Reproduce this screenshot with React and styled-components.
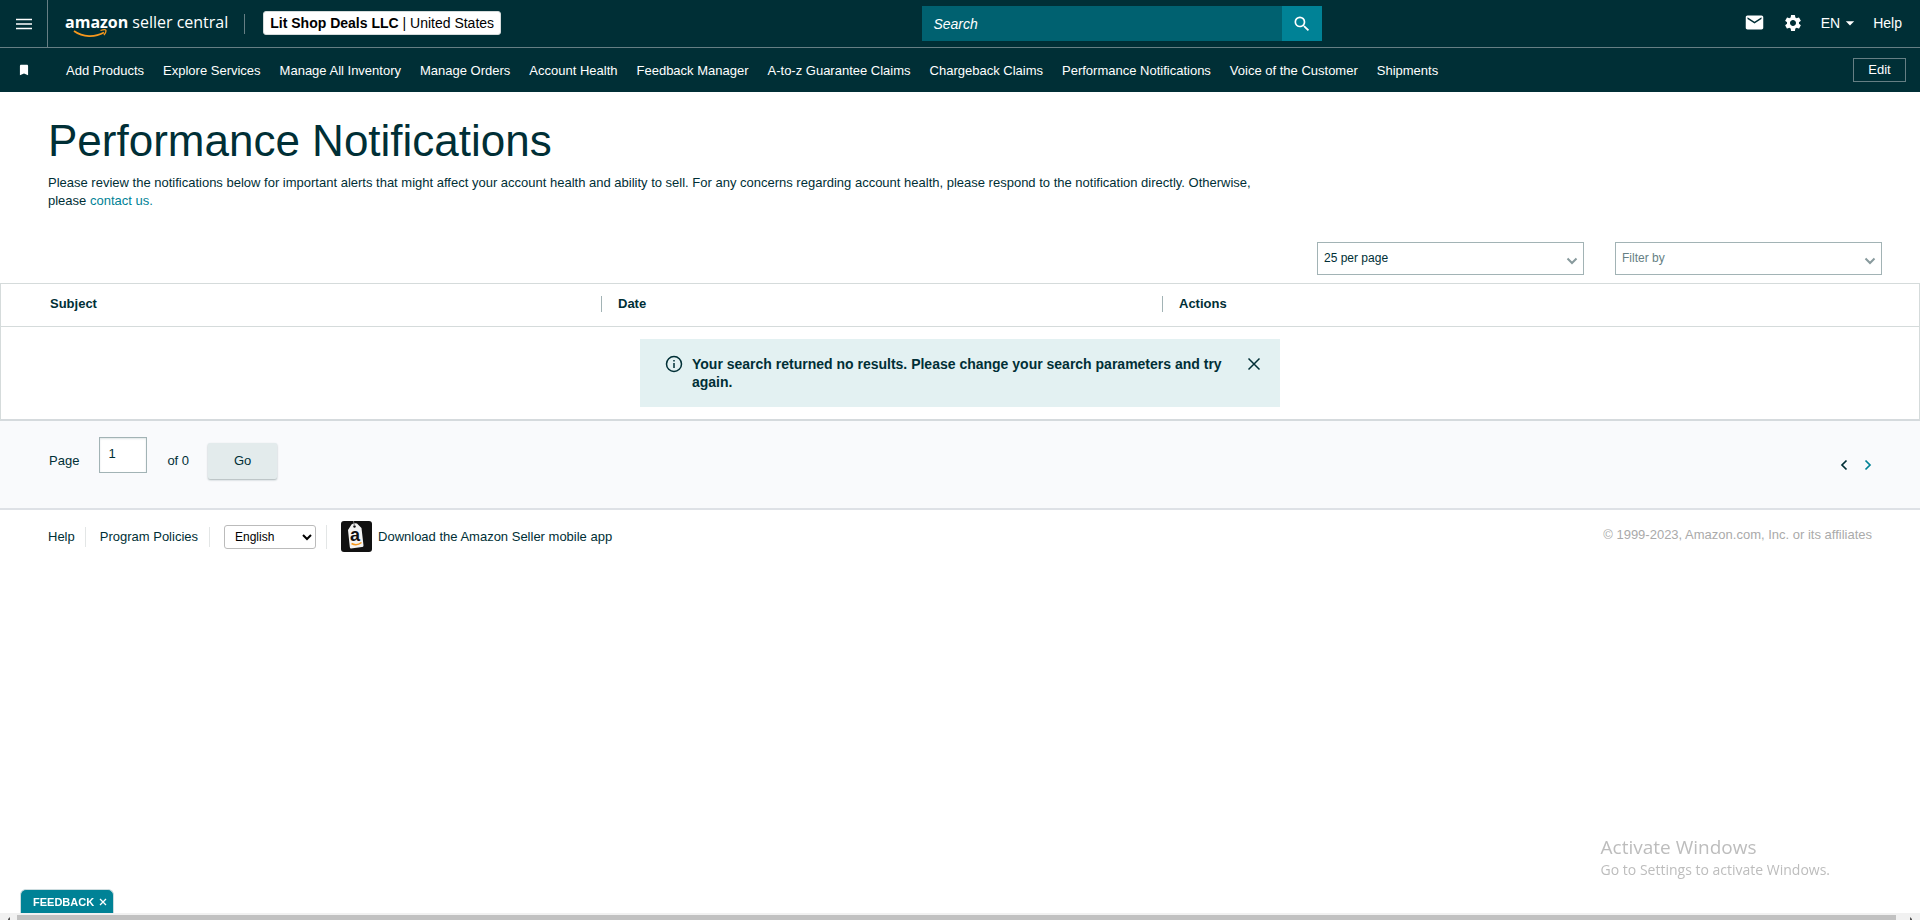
import React from "react";
import styled, { createGlobalStyle } from "styled-components";
import { MdSearch, MdMail, MdSettings, MdBookmark, MdArrowDropDown } from "react-icons/md";

const Global = createGlobalStyle`
  * { box-sizing: border-box; }
  body {
    margin: 0;
    background: #fff;
    color: #002f36;
    font: 13px/18px "Liberation Sans", Arial, sans-serif;
  }
  button, input, select { font: inherit; color: inherit; }
  a { color: inherit; text-decoration: none; }
`;

const Header = styled.header`
  background: #002f36;
  color: #fff;
`;
const TopBar = styled.div`
  display: flex;
  align-items: center;
  justify-content: space-between;
  height: 48px;
  border-bottom: 1px solid #667f84;
  padding-right: 18px;
`;
const Group = styled.div`
  display: flex;
  align-items: center;
  height: 100%;
`;
const IconButton = styled.button`
  display: flex;
  align-items: center;
  justify-content: center;
  padding: 0;
  border: 0;
  background: none;
  cursor: pointer;
`;
const MenuButton = styled(IconButton)`
  width: 48px;
  height: 100%;
  border-right: 1px solid #667f84;
  margin-right: 17px;
`;
const Logo = styled.a`
  display: grid;
  padding-bottom: 4px;
  font: 16px/20px "Open Sans", sans-serif;
  white-space: nowrap;
  & > * { grid-area: 1 / 1; }
  svg { align-self: end; margin: 0 0 -6px 8px; }
`;
const LogoText = styled.span`
  b { font-weight: 700; margin-right: 4px; }
`;
const Divider = styled.span`
  width: 1px;
  height: ${(p) => p.$height}px;
  background: ${(p) => p.$color};
  margin: 0 ${(p) => p.$right}px 0 ${(p) => p.$left}px;
`;
const Account = styled.button`
  height: 24px;
  margin-bottom: 2px;
  padding: 0 6px;
  border: 1px solid #d5dbdb;
  border-radius: 3px;
  background: #fff;
  color: #000;
  font-size: 14px;
  line-height: 20px;
  white-space: nowrap;
`;
const SearchForm = styled.form`
  display: flex;
  width: 400px;
  height: 35px;
`;
const SearchInput = styled.input`
  flex: 1;
  min-width: 0;
  border: 0;
  padding: 0 11px;
  background: #006170;
  color: #fff;
  font-size: 14px;
  font-style: italic;
  &::placeholder { color: #fff; opacity: 1; }
`;
const SearchButton = styled(IconButton)`
  width: 40px;
  background: #008296;
  color: #fff;
`;
const Tools = styled(Group)`
  gap: 18px;
  padding-bottom: 2px;
  font-size: 14px;
`;
const Language = styled(IconButton)`
  svg { margin: 0 -5px 0 0; }
`;
const NavBar = styled.nav`
  display: flex;
  align-items: center;
  height: 44px;
  padding: 0 14px 0 0;
`;
const Bookmark = styled(IconButton)`
  width: 48px;
  margin-right: 18px;
`;
const NavLinks = styled.div`
  display: flex;
  gap: 19px;
  flex: 1;
  padding-top: 2px;
  white-space: nowrap;
`;
const EditButton = styled.button`
  width: 53px;
  height: 24px;
  padding: 0;
  border: 1px solid #667f84;
  background: none;
`;

const Intro = styled.section`
  padding: 23px 48px 32px;
`;
const Title = styled.h1`
  margin: 0 0 7px;
  font-size: 44px;
  line-height: 52px;
  font-weight: 400;
`;
const Lead = styled.p`
  max-width: 1224px;
  margin: 0;
  a { color: #008296; }
`;
const Filters = styled.div`
  display: flex;
  justify-content: flex-end;
  gap: 31px;
  padding: 0 38px 8px;
`;
const SelectWrap = styled.label`
  display: grid;
  align-items: center;
  width: 267px;
  & > * { grid-area: 1 / 1; }
  svg { justify-self: end; margin: 4px 6px 0 0; pointer-events: none; }
`;
const FilterSelect = styled.select`
  appearance: none;
  height: 33px;
  padding: 0 6px 2px;
  border: 1px solid #a2b3b5;
  border-radius: 0;
  background: #fff;
  font-size: 12px;
  color: ${(p) => (p.$muted ? "#667f84" : "#002f36")};
`;

const Table = styled.table`
  width: 100%;
  table-layout: fixed;
  border-collapse: separate;
  border-spacing: 0;
  border: 1px solid #d5dbdb;
  border-bottom: 2px solid #d5dadd;
`;
const Th = styled.th`
  width: ${(p) => p.$width};
  padding: 12px 0 14px ${(p) => (p.$first ? 49 : 0)}px;
  border-bottom: 1px solid #d5dbdb;
  text-align: left;
  line-height: 16px;
  span {
    display: block;
    padding-left: ${(p) => (p.$first ? 0 : 16)}px;
    border-left: ${(p) => (p.$first ? 0 : 1)}px solid #a2b3b5;
  }
`;
const EmptyCell = styled.td`
  padding: 12px 0;
`;
const Alert = styled.div`
  display: flex;
  align-items: flex-start;
  width: 640px;
  margin: 0 auto;
  padding: 16px 18px;
  background: #e3f1f2;
  font-size: 14px;
  font-weight: 700;
  & > svg { margin-left: 7px; flex: none; }
  p { flex: 1; margin: 0 6px 0 9px; }
`;

const Pager = styled.form`
  display: flex;
  align-items: center;
  height: 89px;
  padding: 0 40px 8px 49px;
  background: #f9fafc;
  border-bottom: 2px solid #dee1e6;
`;
const PageInput = styled.input`
  width: 48px;
  height: 36px;
  margin: 0 20px 12px 20px;
  padding: 0 8px 2px;
  border: 1px solid #a2b3b5;
  box-shadow: inset 0 1px 2px #dfe5e6;
`;
const GoButton = styled.button`
  width: 69px;
  height: 36px;
  margin: 0 auto 0 19px;
  border: 0;
  border-radius: 2px;
  background: #e3ebec;
  box-shadow: 0 1px 2px #a9b4b6;
`;
const Arrow = styled(IconButton)`
  width: 24px;
  height: 24px;
  margin-top: 8px;
  color: ${(p) => p.$color};
`;

const Footer = styled.footer`
  display: flex;
  align-items: center;
  padding: 11px 48px;
`;
const LanguageSelect = styled.select`
  width: 92px;
  height: 24px;
  padding: 0 6px;
  border: 1px solid #bbb;
  border-radius: 3px;
  background: #fff;
  color: #000;
  font-size: 12px;
`;
const AppLink = styled.a`
  display: flex;
  align-items: center;
  gap: 6px;
`;
const Copyright = styled.span`
  margin: 0 0 4px auto;
  color: #aaa;
`;

const BottomDock = styled.div`
  position: fixed;
  inset: auto 0 0 0;
`;
const Feedback = styled.button`
  display: flex;
  align-items: center;
  gap: 5px;
  height: 24px;
  margin-left: 20px;
  padding: 0 6px 0 12px;
  border: 1px solid #ccdcdf;
  border-bottom: 0;
  border-radius: 6px 6px 0 0;
  background: #008296;
  color: #fff;
  font-size: 11px;
  font-weight: 700;
`;
const ScrollTrack = styled.div`
  display: flex;
  align-items: flex-end;
  justify-content: space-between;
  height: 7px;
  padding: 2px 8px 0;
  background: #f1f1f1;
`;
const ScrollThumb = styled.div`
  flex: 1;
  height: 5px;
  margin: 0 14px 0 7px;
  background: #c1c1c1;
`;
const Watermark = styled.div`
  position: fixed;
  right: 90px;
  bottom: 40px;
  color: #bdbdbd;
  font: 14px/20px "Open Sans", sans-serif;
  pointer-events: none;
  strong { display: block; font-size: 19px; line-height: 26px; font-weight: 400; }
`;

const Chevron = () => (
  <svg width="12" height="8" viewBox="0 0 12 8" fill="none" stroke="#889a9d" strokeWidth="2">
    <path d="M1.500 1.500 6 6l4.500-4.500" />
  </svg>
);

const links = [
  "Add Products", "Explore Services", "Manage All Inventory", "Manage Orders", "Account Health",
  "Feedback Manager", "A-to-z Guarantee Claims", "Chargeback Claims", "Performance Notifications",
  "Voice of the Customer", "Shipments",
];

export default function App() {
  return (
    <>
      <Global />
      <Header>
        <TopBar>
          <Group>
            <MenuButton aria-label="Menu">
              <svg width="16" height="12" viewBox="0 0 16 12" stroke="#fff" strokeWidth="1.500">
                <path d="M0 1.500h16M0 6h16M0 10.500h16" />
              </svg>
            </MenuButton>
            <Logo href="#" aria-label="amazon seller central">
              <LogoText><b>amazon</b>seller central</LogoText>
              <svg width="36" height="9" viewBox="0 0 36 9" fill="none" stroke="#f7981d">
                <path d="M1 2C10 8.500 22 8.500 31 3.500" strokeWidth="1.800" />
                <path d="M27.500 1.500c3-1 5-.8 5.300-.3.400.8-.3 3-1.800 5" strokeWidth="1.300" />
              </svg>
            </Logo>
            <Divider $height={20} $color="#667f84" $left={16} $right={18} />
            <Account><b>Lit Shop Deals LLC</b> | United States</Account>
          </Group>
          <SearchForm role="search">
            <SearchInput aria-label="Search" placeholder="Search" />
            <SearchButton type="button" aria-label="Submit search"><MdSearch size={20} /></SearchButton>
          </SearchForm>
          <Tools>
            <IconButton aria-label="Messages"><MdMail size={21} /></IconButton>
            <IconButton aria-label="Settings"><MdSettings size={20} /></IconButton>
            <Language>EN<MdArrowDropDown size={20} /></Language>
            <a href="#">Help</a>
          </Tools>
        </TopBar>
        <NavBar>
          <Bookmark aria-label="Bookmarks"><MdBookmark size={14} /></Bookmark>
          <NavLinks>{links.map((l) => <a href="#" key={l}>{l}</a>)}</NavLinks>
          <EditButton>Edit</EditButton>
        </NavBar>
      </Header>

      <main>
        <Intro>
          <Title>Performance Notifications</Title>
          <Lead>
            Please review the notifications below for important alerts that might affect your account health and
            ability to sell. For any concerns regarding account health, please respond to the notification directly.
            Otherwise, please <a href="#">contact us.</a>
          </Lead>
        </Intro>
        <Filters>
          <SelectWrap>
            <FilterSelect aria-label="Results per page"><option>25 per page</option></FilterSelect>
            <Chevron />
          </SelectWrap>
          <SelectWrap>
            <FilterSelect aria-label="Filter by" $muted><option>Filter by</option></FilterSelect>
            <Chevron />
          </SelectWrap>
        </Filters>
        <Table>
          <thead>
            <tr>
              <Th $first $width="600px"><span>Subject</span></Th>
              <Th $width="561px"><span>Date</span></Th>
              <Th><span>Actions</span></Th>
            </tr>
          </thead>
          <tbody>
            <tr>
              <EmptyCell colSpan={3}>
                <Alert role="status">
                  <svg width="18" height="18" viewBox="0 0 18 18" fill="none" stroke="#002f36" strokeWidth="1.500">
                    <circle cx="9" cy="9" r="7.500" />
                    <path d="M9 8v5M9 5v1.500" />
                  </svg>
                  <p>Your search returned no results. Please change your search parameters and try again.</p>
                  <IconButton aria-label="Dismiss">
                    <svg width="16" height="18" viewBox="0 0 16 18" stroke="#002f36" strokeWidth="1.500">
                      <path d="M2.500 3.500l11 11M13.500 3.500l-11 11" />
                    </svg>
                  </IconButton>
                </Alert>
              </EmptyCell>
            </tr>
          </tbody>
        </Table>
        <Pager>
          <label htmlFor="page">Page</label>
          <PageInput id="page" defaultValue="1" />
          <span>of 0</span>
          <GoButton type="button">Go</GoButton>
          <Arrow type="button" aria-label="Previous page" $color="#002f36">
            <svg width="8" height="12" viewBox="0 0 8 12" fill="none" stroke="currentColor" strokeWidth="1.700">
              <path d="M6.500 1.500 2 6l4.500 4.500" />
            </svg>
          </Arrow>
          <Arrow type="button" aria-label="Next page" $color="#008296">
            <svg width="8" height="12" viewBox="0 0 8 12" fill="none" stroke="currentColor" strokeWidth="1.700">
              <path d="M1.500 1.500 6 6l-4.500 4.500" />
            </svg>
          </Arrow>
        </Pager>
      </main>

      <Footer>
        <a href="#">Help</a>
        <Divider $height={20} $color="#e3e6e6" $left={10} $right={14} />
        <a href="#">Program Policies</a>
        <Divider $height={20} $color="#e3e6e6" $left={11} $right={14} />
        <LanguageSelect aria-label="Language"><option>English</option></LanguageSelect>
        <Divider $height={24} $color="#e3e6e6" $left={10} $right={14} />
        <AppLink href="#">
          <svg width="31" height="31" viewBox="0 0 31 31">
            <rect width="31" height="31" rx="3" fill="#111" />
            <path d="M10.500 3.500Q13 1.500 16 2.500L20.500 7l2 17.500Q22.500 26 21 26l-11 1.500Q9 27.500 8.800 26L7 9z" fill="#f4f4f4" />
            <circle cx="13.500" cy="5.500" r="1.200" fill="#111" />
            <path d="M13.500 5 12.500 0" stroke="#777" />
            <text x="9" y="20" fontSize="18" fontWeight="700" fill="#111" fontFamily="Liberation Sans">a</text>
            <path d="M10.500 22.500c3.500 2 7 1.500 10-1" stroke="#f7981d" strokeWidth="1.500" fill="none" />
          </svg>
          Download the Amazon Seller mobile app
        </AppLink>
        <Copyright>© 1999-2023, Amazon.com, Inc. or its affiliates</Copyright>
      </Footer>

      <Watermark>
        <strong>Activate Windows</strong>
        Go to Settings to activate Windows.
      </Watermark>
      <BottomDock>
        <Feedback>
          FEEDBACK
          <svg width="8" height="8" viewBox="0 0 8 8" stroke="#fff" strokeWidth="1.300">
            <path d="M1 1l6 6M7 1 1 7" />
          </svg>
        </Feedback>
        <ScrollTrack>
          <svg width="2" height="3" viewBox="0 0 2 3"><path d="M2 0v3H0V2z" fill="#555" /></svg>
          <ScrollThumb />
          <svg width="2" height="3" viewBox="0 0 2 3"><path d="M0 0v3h2V2z" fill="#555" /></svg>
        </ScrollTrack>
      </BottomDock>
    </>
  );
}
